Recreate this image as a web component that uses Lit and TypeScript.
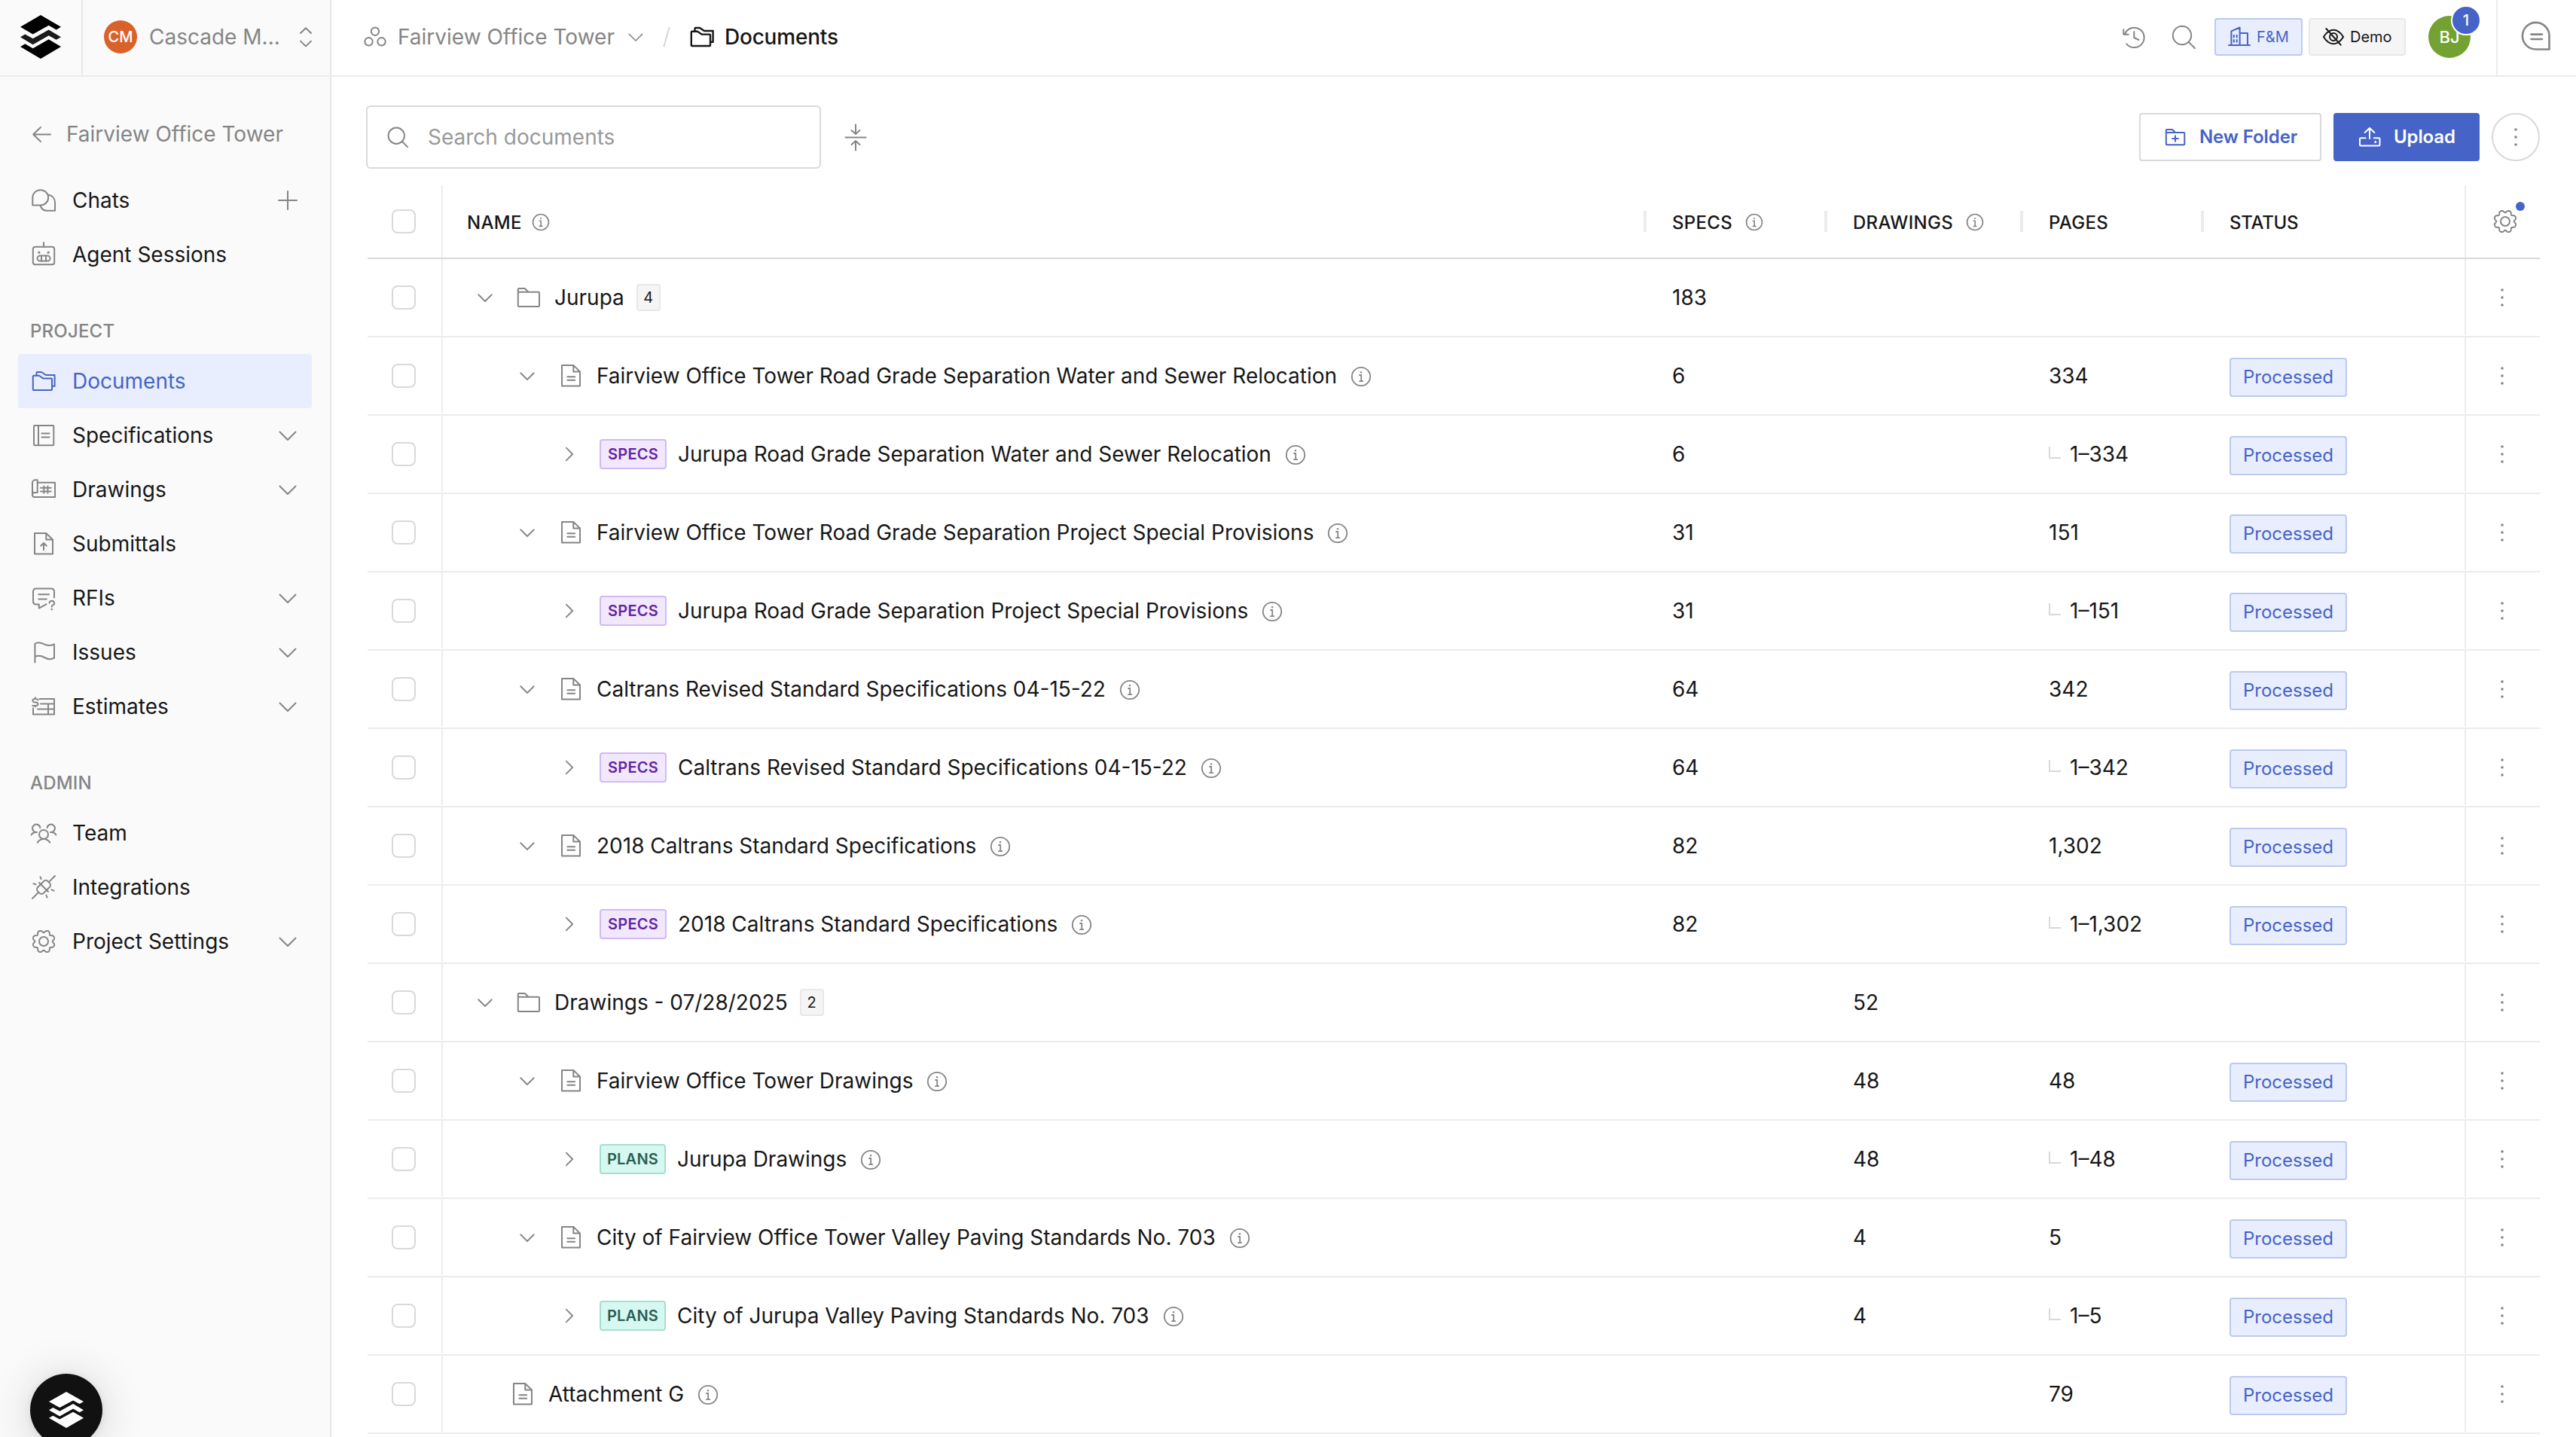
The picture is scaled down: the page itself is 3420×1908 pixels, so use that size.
import { css, html, LitElement, nothing, svg, SVGTemplateResult, TemplateResult } from 'lit';
import { customElement, property } from 'lit/decorators.js';
import { classMap } from 'lit/directives/class-map.js';
import { styleMap } from 'lit/directives/style-map.js';

// Wavy eight-tooth outline, notches pointing to the compass directions
const gearPath = (() => {
    const points: string[] = [];
    for (let i = 0; i < 192; i++) {
        const a = (i / 192) * Math.PI * 2;
        const notch = Math.pow((1 + Math.cos(8 * a)) / 2, 1.6);
        const r = 14.9 - 3.2 * notch;
        points.push(`${(16 + r * Math.cos(a)).toFixed(2)} ${(16 + r * Math.sin(a)).toFixed(2)}`);
    }
    return `M${points.join('L')}Z`;
})();

const pageOutline = svg`<path d="M4 2H19.3L28 10.5V29.5H4Z M19.3 2V10.5H28"/>`;

const shapes: Record<string, SVGTemplateResult> = {
    chats: svg`<path d="M1.3 22.6V12.7A10.4 10.2 0 1 1 11.7 22.6Z M23 8.8C28 10.2 31 14.4 31 19V29.8H20.5C16.5 29.8 13 27.4 11.7 23.4"/>`,
    robot: svg`<rect x="1.8" y="5.8" width="28.4" height="23.4" rx="3"/><path d="M16 0V5.5M13 17.8V24.6M19 17.8V24.6"/>
        <rect x="7.6" y="17.6" width="17" height="7" rx="3.5"/><circle class="dot" cx="9.8" cy="13.2" r="1.6"/><circle class="dot" cx="22.2" cy="13.2" r="1.6"/>`,
    folders: svg`<path d="M1.8 9.8Q1.8 8.8 2.8 8.8H10L15.5 12.6H26Q27 12.6 27 13.6V27Q27 28 26 28H2.8Q1.8 28 1.8 27Z"/>
        <path d="M6.5 8.6V5Q6.5 4 7.5 4H13L19 8H30.6V22.8H27"/>`,
    specs: svg`<rect x="3" y="3" width="26.3" height="26.2" rx="1"/><path d="M9 3V29M13.4 13.6H23.6M13.4 18.4H23.6"/>`,
    blueprint: svg`<path d="M7.7 20V3.3H4.8A3.8 3.8 0 0 0 1 7.1V23A3 3 0 0 0 4 26.1H31V6.7H7.7M7.7 20H4A3 3 0 0 0 1 23"/>
        <path d="M16.4 11.4V20.8M21.4 11.4V20.8M12 13.7H25.7M12 18.5H25.7"/>`,
    submittal: svg`${pageOutline}<path d="M16 24.3V15M12.2 18.7L16 14.9L19.8 18.7"/>`,
    doc: svg`${pageOutline}<path d="M11.4 17.2H21.2M11.4 21.8H21.2"/>`,
    rfi: svg`<path d="M30 15.5V7.6Q30 3.4 25.8 3.4H6.2Q2 3.4 2 7.6V20.4Q2 24.4 6.2 24.4H9.8V29.6L19.6 24.2M9.2 11.3H23M9.2 17.6H19.8"/>
        <path d="M23.6 22.8A3.2 3 0 1 1 28 25.6C26.9 26.1 26.7 26.6 26.7 27.8"/><circle class="dot" cx="26.7" cy="31" r="1.3"/>`,
    flag: svg`<path d="M4.4 29.6V4.8C7.5 2.6 11.5 2.8 15.5 4.8S25.5 7.6 30 5.4V23.6C25.5 26.2 21 25.2 17 23S8.500 20 4.400 22.200"/>`,
    estimates: svg`<path d="M10.5 6H30V26.4H2V18.2M12 12.5H30M8 19.4H30M22 12.5V26.4"/>
        <path d="M8.6 7.4Q7.6 6 5 6Q1.4 6 1.4 8.3T5 10.5T8.5 13Q8.5 15 5 15H1.2M5 4.2V6M5 15V16.6"/>`,
    team: svg`<circle cx="16" cy="17.9" r="6"/><path d="M7.8 28.6C10 25.5 12.5 24 16 24S22 25.5 24.2 28.6"/>
        <path d="M11.4 9A5.2 5.2 0 1 0 4.2 14.6M-.4 18.4C1 16 3.5 14.7 7 15"/>
        <path d="M20.6 9A5.2 5.2 0 1 1 27.8 14.6M32.4 18.4C31 16 28.5 14.7 25 15"/>`,
    plug: svg`<path d="M31 1L23.4 8.6M1 31L8.6 23.4M10 10L22 22"/>
        <rect x="6.5" y="10.5" width="19" height="11" rx="4" transform="rotate(-45 16 16)"/>
        <path d="M11.5 2.4L12.6 5.2M2.4 11.2L5.5 12.4M26.5 19.4L29.6 20.7M19.4 26.7L20.6 29.6"/>`,
    gear: svg`<path d="${gearPath}"/><circle cx="16" cy="16" r="6"/>`,
    nodes: svg`<circle cx="16" cy="8.7" r="5.2"/><circle cx="7.5" cy="22.3" r="5.2"/><circle cx="24.5" cy="22.3" r="5.2"/>`,
    search: svg`<circle cx="14" cy="14" r="12.2"/><path d="M22.6 22.6L31 31"/>`,
    history: svg`<path d="M4 12.6A13.2 13.2 0 1 1 6.3 25.3M2.3 6.3V12.7H8.8M16.3 9.2V17L22.5 20"/>`,
    collapse: svg`<path d="M2.5 17.5H29.5M16 .5V12.5M10.5 8L16 13L21.5 8M16 34.5V22.5M10.5 27L16 22L21.5 27"/>`,
    folder: svg`<path d="M1.8 9V5Q1.8 4 2.8 4H10.8L15.5 8.8H29Q30 8.8 30 9.8V27Q30 28 29 28H2.8Q1.8 28 1.8 27V8.8H15.5"/>`,
    building: svg`<path d="M0 25H28M3.4 25V6.4L14.6 1.5V25M14.6 9H25V25M6.8 11.8V14.6M10.7 11.8V14.6M6.8 18V20.8M10.7 18V20.8"/>`,
    eyeOff: svg`<path d="M.9 14C5 7.5 9 4.8 14 4.8S23 7.5 27.1 14C23 20.5 19 23.2 14 23.2S5 20.5 .9 14Z"/><circle cx="14" cy="14" r="5"/><path d="M4.3 3L23.7 24.7M11.5 11.2L16.5 16.8"/>`,
    newFolder: svg`<path d="M1.8 8V5Q1.8 4 2.8 4H10L14 8H25.3Q26.3 8 26.3 9V23.3Q26.3 24.3 25.3 24.3H2.8Q1.8 24.3 1.8 23.3V8H14M14 12.2V19.8M10.2 16H17.8"/>`,
    tray: svg`<path d="M14 16V2.4M7.6 8L14 2L20.4 8M8.6 15.3H2.3Q1 15.3 1 16.6V24.2Q1 25.5 2.3 25.5H26.2Q27.5 25.5 27.5 24.2V16.6Q27.5 15.3 26.2 15.3H19.7"/><circle class="dot" cx="21.7" cy="20.4" r="1.5"/>`,
    info: svg`<circle cx="14" cy="14" r="12.2"/><path d="M12 12H14.2V20M12 20.2H16.2"/><circle class="dot" cx="14" cy="8.3" r="1.2"/>`,
    comment: svg`<path d="M37.5 37.5V20A17.8 17.8 0 1 0 20 37.5Z M13.5 17.6H28M13.5 24H28"/>`,
    kebab: svg`<circle class="dot" cx="14" cy="4" r="1.8"/><circle class="dot" cx="14" cy="14" r="1.8"/><circle class="dot" cx="14" cy="24" r="1.8"/>`,
    arrowLeft: svg`<path d="M24 12.5H1.5M11 3L1.2 12.5L11 22"/>`,
    plus: svg`<path d="M12 0V24M0 12H24"/>`,
    down: svg`<path d="M1.5 7.5L12 18L22.5 7.5"/>`,
    right: svg`<path d="M7 2L17 12L7 22"/>`,
    sort: svg`<path d="M1 8L8 1.2L15 8M1 18.6L8 25.4L15 18.6"/>`,
    elbow: svg`<path d="M1 0V15H16"/>`,
};

const icon = (name: string, width: number, height = width, box = `0 0 ${width} ${height}`) => html`
    <svg class="icon ${name}" width=${width} height=${height} viewBox=${box}>${shapes[name]}</svg>`;

const logo = (width: number, height: number) => html`
    <svg class="logo" width=${width} height=${height} viewBox="81 60 162 173" preserveAspectRatio="none">
        <path d="M162 60L243 107L224 118L194 101L131 136L81 107Z"/>
        <path class="middle" d="M194 118L243 147L224 158L194 141L131 177L81 147L100 136L131 153Z"/>
        <path d="M194 156L243 185L162 233L81 185L100 174L131 192Z"/>
    </svg>`;

const shared = css`
    * {
        box-sizing: border-box;
    }

    .icon {
        flex: none;
        display: block;
        fill: none;
        stroke: currentColor;
        stroke-width: 2;
        stroke-linecap: round;
        stroke-linejoin: round;
        overflow: visible;
        color: #858585;
    }

    .icon .dot {
        fill: currentColor;
        stroke: none;
    }

    .logo {
        display: block;
        flex: none;
    }
`;

interface NavItem {
    icon: string;
    label: string;
    trail?: 'plus' | 'down';
    active?: boolean;
}

const mainItems: NavItem[] = [
    { icon: 'chats', label: 'Chats', trail: 'plus' },
    { icon: 'robot', label: 'Agent Sessions' },
];

const projectItems: NavItem[] = [
    { icon: 'folders', label: 'Documents', active: true },
    { icon: 'specs', label: 'Specifications', trail: 'down' },
    { icon: 'blueprint', label: 'Drawings', trail: 'down' },
    { icon: 'submittal', label: 'Submittals' },
    { icon: 'rfi', label: 'RFIs', trail: 'down' },
    { icon: 'flag', label: 'Issues', trail: 'down' },
    { icon: 'estimates', label: 'Estimates', trail: 'down' },
];

const adminItems: NavItem[] = [
    { icon: 'team', label: 'Team' },
    { icon: 'plug', label: 'Integrations' },
    { icon: 'gear', label: 'Project Settings', trail: 'down' },
];

@customElement('side-nav')
class SideNav extends LitElement {
    static styles = [shared, css`
        :host {
            display: flex;
            flex-direction: column;
            width: 440px;
            height: 100%;
            box-sizing: border-box;
            background: #fafafa;
            border-right: 2px solid #e8e8e8;
            font-size: 28px;
            color: #171717;
        }

        .org {
            display: flex;
            height: 102px;
            border-bottom: 2px solid #ececec;
        }

        .brand {
            width: 110px;
            padding: 20px 27px;
            border-right: 2px solid #e8e8e8;
        }

        .brand .middle {
            fill: #1a1a1a;
        }

        .switcher {
            flex: 1;
            display: flex;
            align-items: center;
            padding: 0 24px 2px 28px;
            color: #858585;
        }

        .mark {
            display: flex;
            align-items: center;
            justify-content: center;
            width: 44px;
            height: 44px;
            margin-right: 16px;
            border-radius: 50%;
            background: #d9622b;
            color: #fff;
            font-size: 20px;
            font-weight: 500;
        }

        .org-name {
            flex: 1;
            white-space: nowrap;
        }

        .back {
            display: flex;
            align-items: center;
            height: 56px;
            margin: 48px 0 24px;
            padding-left: 43px;
            gap: 20px;
            color: #858585;
        }

        .item {
            display: flex;
            align-items: center;
            height: 72px;
            margin: 0 24px;
            padding: 0 20px 0 18px;
            border-radius: 4px;
        }

        .item.active {
            background: #e8eefe;
            color: #4663c7;
        }

        .item.active .icon {
            color: #4663c7;
        }

        .label {
            flex: 1;
            margin-left: 22px;
        }

        .section {
            height: 96px;
            padding: 52px 0 0 40px;
            line-height: 28px;
            font-size: 24px;
            font-weight: 500;
            letter-spacing: 0.2px;
            color: #858585;
        }
    `];

    renderItem(item: NavItem) {
        return html`
            <div class=${classMap({ item: true, active: !!item.active })}>
                ${icon(item.icon, 32)}
                <span class="label">${item.label}</span>
                ${item.trail ? icon(item.trail, 24) : nothing}
            </div>`;
    }

    render() {
        return html`
            <div class="org">
                <div class="brand">${logo(54, 58)}</div>
                <div class="switcher">
                    <span class="mark">CM</span>
                    <span class="org-name">Cascade M...</span>
                    ${icon('sort', 16, 27)}
                </div>
            </div>
            <div class="back">${icon('arrowLeft', 25)}<span>Fairview Office Tower</span></div>
            ${mainItems.map((i) => this.renderItem(i))}
            <div class="section">PROJECT</div>
            ${projectItems.map((i) => this.renderItem(i))}
            <div class="section">ADMIN</div>
            ${adminItems.map((i) => this.renderItem(i))}
        `;
    }
}

@customElement('top-bar')
class TopBar extends LitElement {
    static styles = [shared, css`
        :host {
            display: flex;
            align-items: center;
            height: 102px;
            box-sizing: border-box;
            padding: 0 0 0 42px;
            border-bottom: 2px solid #ececec;
            font-size: 28px;
            color: #858585;
        }

        .crumb {
            display: flex;
            align-items: center;
            padding-bottom: 2px;
        }

        .crumb .nodes {
            margin-right: 14px;
        }

        .crumb .down {
            margin-left: 18px;
        }

        .slash {
            width: 2px;
            height: 26px;
            margin: 0 30px 2px 30px;
            background: #d4d4d4;
            transform: skewX(-16deg);
        }

        .current {
            color: #171717;
        }

        .current span {
            font-weight: 500;
            letter-spacing: -0.2px;
        }

        .current .folders {
            margin-right: 14px;
            stroke-width: 2.4;
            color: #171717;
        }

        .tools {
            flex: 1;
            display: flex;
            align-items: center;
            justify-content: flex-end;
            padding-bottom: 2px;
        }

        .tools .history {
            margin-right: 34px;
        }

        .tools .search {
            margin-right: 25px;
        }

        .chip {
            display: flex;
            align-items: center;
            gap: 8px;
            height: 50px;
            padding-left: 17px;
            border: 2px solid #e8e8e8;
            border-radius: 4px;
            background: #f5f5f5;
            font-size: 20px;
            color: #171717;
        }

        .chip .icon {
            color: inherit;
        }

        .chip.demo {
            width: 129px;
            margin-left: 8px;
        }

        .chip.org {
            width: 117px;
            gap: 9px;
            border-color: #bccaf0;
            background: #e8eefe;
            color: #4663c7;
        }

        .avatar {
            position: relative;
            display: flex;
            align-items: center;
            justify-content: center;
            width: 56px;
            height: 56px;
            margin: 0 34px 0 30px;
            border-radius: 50%;
            background: #74a232;
            color: #fff;
            font-size: 22px;
            font-weight: 500;
        }

        .count {
            position: absolute;
            top: -14px;
            right: -14px;
            width: 40px;
            height: 40px;
            border: 2px solid #fff;
            border-radius: 50%;
            background: #4663c7;
            font-size: 20px;
            line-height: 36px;
            text-align: center;
        }

        .side {
            display: flex;
            align-items: center;
            width: 106px;
            height: 100px;
            padding: 0 0 4px 31px;
            border-left: 2px solid #ececec;
        }

        .side .icon {
            stroke-width: 2.6;
        }
    `];

    render() {
        return html`
            <div class="crumb">
                ${icon('nodes', 32)}
                <span>Fairview Office Tower</span>
                ${icon('down', 20, 20, '0 0 24 24')}
            </div>
            <div class="slash"></div>
            <div class="crumb current">
                ${icon('folders', 32)}
                <span>Documents</span>
            </div>
            <div class="tools">
                ${icon('history', 32)}
                ${icon('search', 32)}
                <div class="chip org">${icon('building', 28)}<span>F&amp;M</span></div>
                <div class="chip demo">${icon('eyeOff', 28)}<span>Demo</span></div>
                <div class="avatar">BJ<span class="count">1</span></div>
            </div>
            <div class="side">${icon('comment', 40)}</div>
        `;
    }
}

interface DocRow {
    kind: 'folder' | 'file' | 'specs' | 'plans';
    name: string;
    root?: boolean;
    count?: number;
    specs?: string;
    drawings?: string;
    pages?: string;
}

const rows: DocRow[] = [
    { kind: 'folder', name: 'Jurupa', count: 4, specs: '183' },
    { kind: 'file', name: 'Fairview Office Tower Road Grade Separation Water and Sewer Relocation', specs: '6', pages: '334' },
    { kind: 'specs', name: 'Jurupa Road Grade Separation Water and Sewer Relocation', specs: '6', pages: '1–334' },
    { kind: 'file', name: 'Fairview Office Tower Road Grade Separation Project Special Provisions', specs: '31', pages: '151' },
    { kind: 'specs', name: 'Jurupa Road Grade Separation Project Special Provisions', specs: '31', pages: '1–151' },
    { kind: 'file', name: 'Caltrans Revised Standard Specifications 04-15-22', specs: '64', pages: '342' },
    { kind: 'specs', name: 'Caltrans Revised Standard Specifications 04-15-22', specs: '64', pages: '1–342' },
    { kind: 'file', name: '2018 Caltrans Standard Specifications', specs: '82', pages: '1,302' },
    { kind: 'specs', name: '2018 Caltrans Standard Specifications', specs: '82', pages: '1–1,302' },
    { kind: 'folder', name: 'Drawings - 07/28/2025', count: 2, drawings: '52' },
    { kind: 'file', name: 'Fairview Office Tower Drawings', drawings: '48', pages: '48' },
    { kind: 'plans', name: 'Jurupa Drawings', drawings: '48', pages: '1–48' },
    { kind: 'file', name: 'City of Fairview Office Tower Valley Paving Standards No. 703', drawings: '4', pages: '5' },
    { kind: 'plans', name: 'City of Jurupa Valley Paving Standards No. 703', drawings: '4', pages: '1–5' },
    { kind: 'file', name: 'Attachment G', root: true, pages: '79' },
];

@customElement('document-row')
class DocumentRow extends LitElement {
    @property({ attribute: false }) row!: DocRow;

    static styles = [shared, css`
        :host {
            display: grid;
            grid-template-columns: 100px 1596px 240px 260px 240px 348px 100px;
            height: 104px;
            box-sizing: border-box;
            border-bottom: 2px solid #ececec;
            font-size: 28px;
            color: #171717;
        }

        .cell {
            display: flex;
            align-items: center;
            padding-left: 36px;
            white-space: nowrap;
        }

        .check {
            padding-left: 32px;
            border-right: 2px solid #ececec;
            margin-bottom: 1px;
        }

        .box {
            width: 32px;
            height: 32px;
            border: 2px solid #d9d9d9;
            border-radius: 8px;
        }

        .name {
            padding-left: 0;
        }

        .toggle {
            margin-right: 32px;
        }

        .toggle .icon {
            stroke-width: 2.2;
        }

        .folder, .doc {
            margin-right: 18px;
        }

        .name .info {
            margin: 2px 0 0 18px;
            stroke-width: 1.8;
        }

        .count {
            width: 32px;
            height: 36px;
            margin-left: 16px;
            border: 2px solid #e8e8e8;
            border-radius: 4px;
            background: #f5f5f5;
            font-size: 20px;
            line-height: 32px;
            text-align: center;
        }

        .tag {
            width: 89px;
            height: 40px;
            margin: 0 15px 0 -2px;
            border: 2px solid #d2b9f4;
            border-radius: 4px;
            background: #f1e8fd;
            font-size: 20px;
            font-weight: 600;
            line-height: 37px;
            letter-spacing: 0.2px;
            text-align: center;
            color: #6425a5;
        }

        .tag.plans {
            width: 88px;
            border-color: #a4dfd1;
            background: #d6f8f0;
            color: #2b5d55;
        }

        .number {
            font-weight: 400;
        }

        .elbow {
            margin: -5px 12px 0 0;
            color: #d9d9d9;
            stroke-linecap: butt;
            stroke-linejoin: miter;
        }

        .status {
            width: 156px;
            height: 52px;
            margin-top: 4px;
            border: 2px solid #bccaf0;
            border-radius: 4px;
            background: #e8eefe;
            color: #4663c7;
            font-size: 24px;
            line-height: 48px;
            text-align: center;
        }

        .menu {
            padding-left: 34px;
            border-left: 2px solid #ececec;
            margin-bottom: 1px;
        }
    `];

    get indent() {
        const { kind, root } = this.row;
        if (root) {
            return 90;
        }
        return { folder: 46, file: 102, specs: 158, plans: 158 }[kind];
    }

    renderLead(): TemplateResult {
        const { kind, root } = this.row;
        const toggle = (name: string) => html`<span class="toggle">${icon(name, 20, 20, '0 0 24 24')}</span>`;
        if (kind === 'folder') {
            return html`${toggle('down')}${icon('folder', 32)}`;
        }
        if (kind === 'file') {
            return html`${root ? nothing : toggle('down')}${icon('doc', 32)}`;
        }
        return html`${toggle('right')}<span class="tag ${kind}">${kind.toUpperCase()}</span>`;
    }

    render() {
        const { kind, name, count, specs, drawings, pages } = this.row;
        const nested = kind === 'specs' || kind === 'plans';
        return html`
            <div class="cell check"><span class="box"></span></div>
            <div class="cell name" style=${styleMap({ paddingLeft: `${this.indent}px` })}>
                ${this.renderLead()}
                <span>${name}</span>
                ${count ? html`<span class="count">${count}</span>` : icon('info', 28)}
            </div>
            <div class="cell number">${specs}</div>
            <div class="cell number">${drawings}</div>
            <div class="cell number">${nested ? icon('elbow', 16) : nothing}${pages}</div>
            <div class="cell">${kind === 'folder' ? nothing : html`<span class="status">Processed</span>`}</div>
            <div class="cell menu">${icon('kebab', 28)}</div>
        `;
    }
}

@customElement('documents-page')
class DocumentsPage extends LitElement {
    static styles = [shared, css`
        :host {
            display: block;
            padding: 38px 48px 0 46px;
            color: #171717;
        }

        .toolbar {
            display: flex;
            align-items: center;
            height: 84px;
        }

        .field {
            display: flex;
            align-items: center;
            width: 604px;
            height: 84px;
            padding-left: 26px;
            border: 2px solid #d9d9d9;
            border-radius: 6px;
            font-size: 28px;
            color: #999;
        }

        .field .icon {
            margin-right: 26px;
            stroke-width: 2.2;
        }

        .toolbar .collapse {
            margin-left: 30px;
        }

        .actions {
            flex: 1;
            display: flex;
            justify-content: flex-end;
        }

        .button {
            display: flex;
            align-items: center;
            height: 64px;
            border-radius: 4px;
            font-size: 24px;
            font-weight: 600;
            letter-spacing: -0.1px;
        }

        .button span {
            padding-bottom: 1px;
        }

        .button .icon {
            color: inherit;
            margin-right: 18px;
        }

        .new-folder {
            width: 242px;
            padding-left: 32px;
            border: 2px solid #d9d9d9;
            color: #4663c7;
        }

        .upload {
            width: 194px;
            margin: 0 16px;
            padding-left: 34px;
            background: #4663c7;
            color: #fff;
        }

        .more {
            display: flex;
            align-items: center;
            justify-content: center;
            width: 64px;
            height: 64px;
            border: 2px solid #d9d9d9;
            border-radius: 50%;
        }

        .table {
            margin: 22px 0 0 2px;
        }

        .head {
            display: grid;
            grid-template-columns: 100px 1596px 240px 260px 240px 348px 100px;
            height: 98px;
            border-bottom: 2px solid #d9d9d9;
            font-size: 24px;
            font-weight: 500;
            letter-spacing: 0.3px;
        }

        .cell {
            display: flex;
            align-items: center;
        }

        .check {
            padding-left: 32px;
            border-right: 2px solid #ececec;
        }

        .box {
            width: 32px;
            height: 32px;
            border: 2px solid #d9d9d9;
            border-radius: 8px;
        }

        .name {
            padding-left: 32px;
        }

        .title {
            padding-top: 2px;
        }

        .title.last {
            letter-spacing: -0.3px;
        }

        .handle {
            width: 4px;
            height: 28px;
            margin: 0 34px 0 -2px;
            background: #ececec;
        }

        .head .info {
            margin: 2px 0 0 17px;
            stroke-width: 1.9;
        }

        .head .name .info {
            margin-left: 13px;
        }

        .settings {
            position: relative;
            padding-left: 36px;
            border-left: 2px solid #ececec;
        }

        .marker {
            position: absolute;
            top: 22px;
            left: 66px;
            width: 12px;
            height: 12px;
            border-radius: 50%;
            background: #4663c7;
        }
    `];

    renderHeading(label: string, info = false, last = false) {
        return html`
            <div class="cell">
                <span class="handle"></span>
                <span class=${classMap({ title: true, last })}>${label}</span>
                ${info ? icon('info', 24, 24, '0 0 28 28') : nothing}
            </div>`;
    }

    render() {
        return html`
            <div class="toolbar">
                <div class="field">${icon('search', 28, 28, '0 0 32 32')}<span>Search documents</span></div>
                ${icon('collapse', 32, 35)}
                <div class="actions">
                    <div class="button new-folder">${icon('newFolder', 28)}<span>New Folder</span></div>
                    <div class="button upload">${icon('tray', 28)}<span>Upload</span></div>
                    <div class="more">${icon('kebab', 28)}</div>
                </div>
            </div>
            <div class="table">
                <div class="head">
                    <div class="cell check"><span class="box"></span></div>
                    <div class="cell name"><span class="title">NAME</span>${icon('info', 24, 24, '0 0 28 28')}</div>
                    ${this.renderHeading('SPECS', true)}
                    ${this.renderHeading('DRAWINGS', true)}
                    ${this.renderHeading('PAGES')}
                    ${this.renderHeading('STATUS', false, true)}
                    <div class="cell settings">${icon('gear', 32)}<span class="marker"></span></div>
                </div>
                ${rows.map((row) => html`<document-row .row=${row}></document-row>`)}
            </div>
        `;
    }
}

@customElement('app-root')
class AppRoot extends LitElement {
    static styles = [shared, css`
        :host {
            position: relative;
            display: flex;
            height: 1908px;
            overflow: hidden;
            background: #fff;
            font-family: Inter, 'Liberation Sans', sans-serif;
        }

        side-nav {
            flex: none;
        }

        .main {
            flex: 1;
            min-width: 0;
        }

        .launcher {
            position: absolute;
            left: 40px;
            top: 1824px;
            width: 96px;
            height: 96px;
            padding: 24px 25px;
            border-radius: 50%;
            background: #111;
            box-shadow: 0 4px 60px rgba(0, 0, 0, 0.16), 0 2px 12px rgba(0, 0, 0, 0.08);
        }

        .launcher .logo {
            fill: #fff;
        }
    `];

    render() {
        return html`
            <side-nav></side-nav>
            <div class="main">
                <top-bar></top-bar>
                <documents-page></documents-page>
            </div>
            <div class="launcher">${logo(46, 48)}</div>
        `;
    }
}
